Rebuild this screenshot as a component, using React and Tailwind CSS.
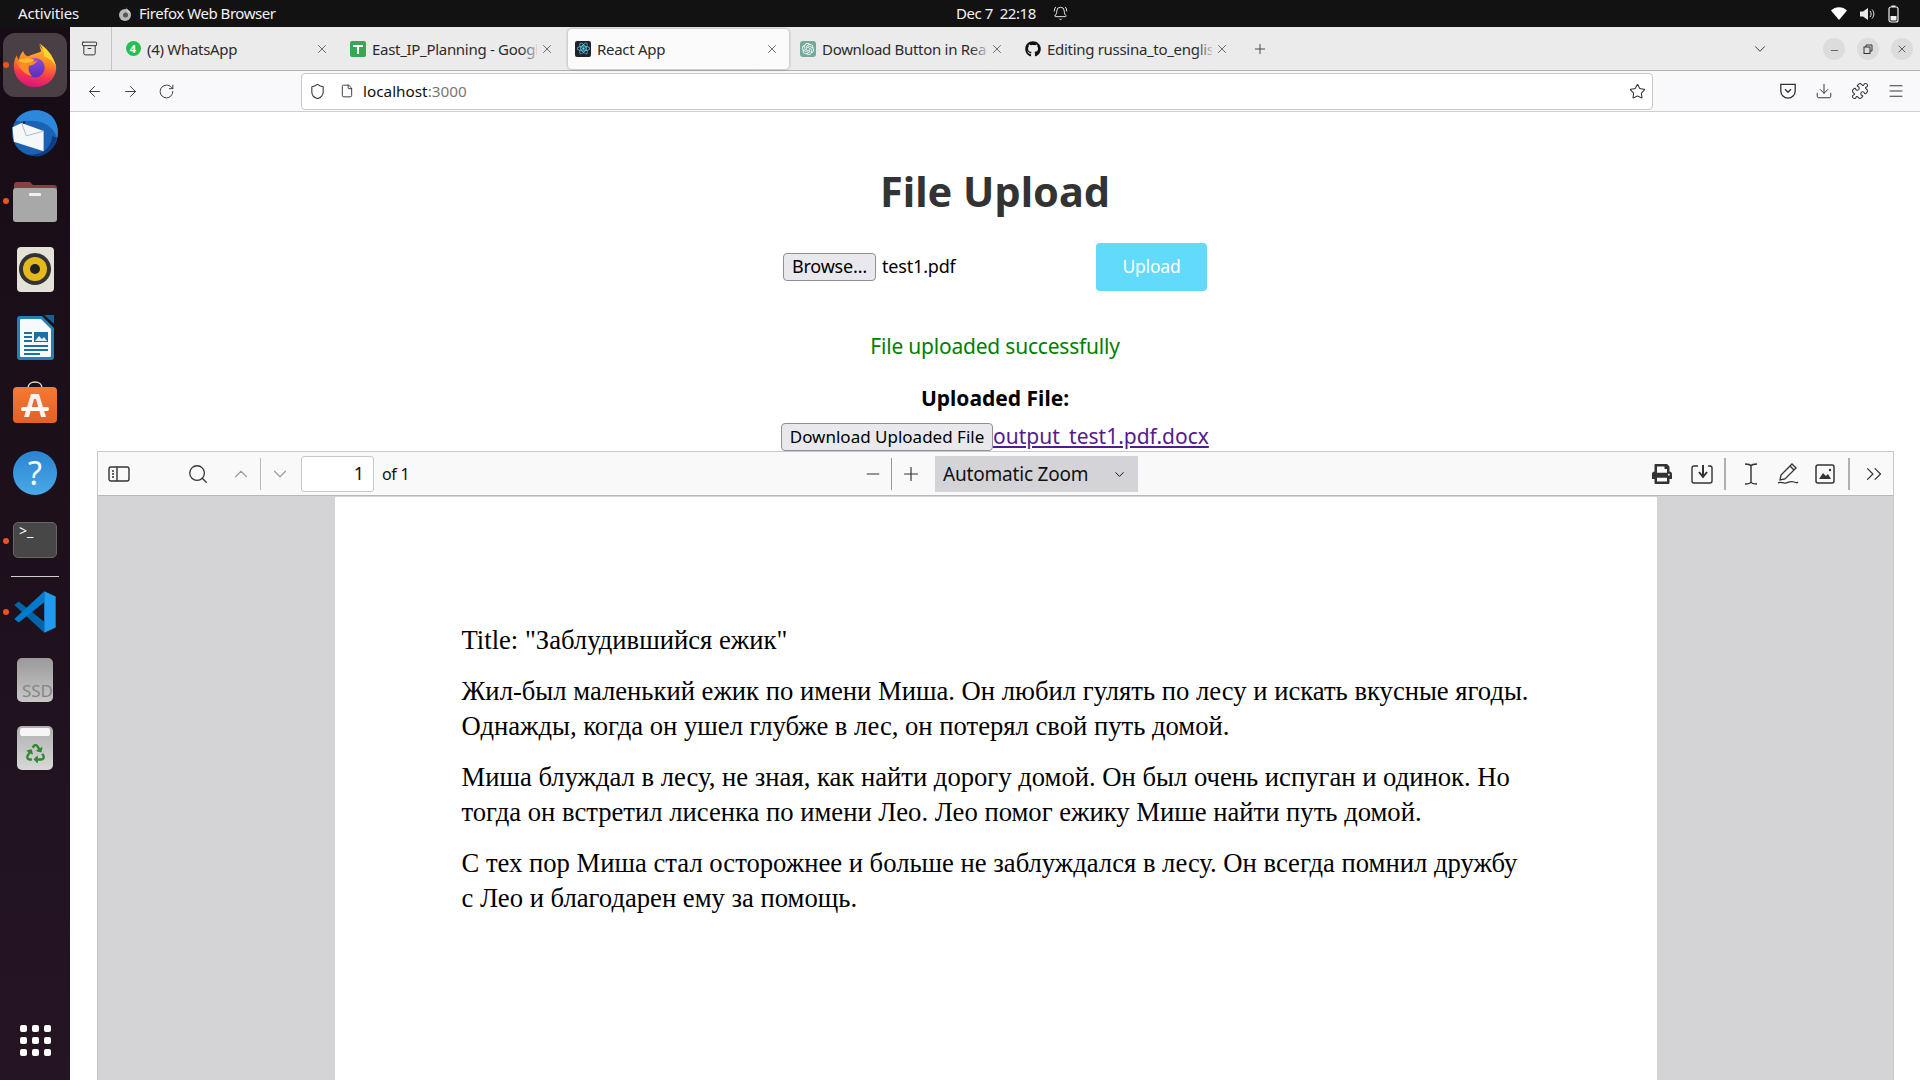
import React from 'react';
import {
  ArrowLeft, ArrowRight, RotateCw, Shield, File, Star, Download, Puzzle, Menu, ChevronDown, ChevronUp,
  ChevronsRight, Minus, Plus, X, Search, BellRing, Archive,
} from 'lucide-react';
import { FaGithub, FaPrint, FaRecycle } from 'react-icons/fa';
import { SiReact, SiOpenai } from 'react-icons/si';

const FirefoxIcon = () => (
  <svg width="44" height="44" viewBox="0 0 100 100">
    <defs>
      <linearGradient id="ffBody" x1="0.6" y1="0" x2="0.4" y2="1">
        <stop offset="0" stopColor="#ffc42e" />
        <stop offset="0.4" stopColor="#ff8a22" />
        <stop offset="0.72" stopColor="#f8364f" />
        <stop offset="1" stopColor="#d6157f" />
      </linearGradient>
      <linearGradient id="ffCore" x1="0.5" y1="0" x2="0.5" y2="1">
        <stop offset="0" stopColor="#8a4be0" />
        <stop offset="1" stopColor="#5b2fb4" />
      </linearGradient>
    </defs>
    <path
      d="M60 1C60 12 75 18 84 28C95 40 99 52 98 60C95 84 74 100 50 100C23 100 2 79 2 52C2 42 5 33 9 28C9 33 11 36 13 38C15 30 18 24 23 18C25 26 30 30 36 30C46 24 62 22 64 18C62 12 60 6 60 1Z"
      fill="url(#ffBody)"
    />
    <circle cx="50" cy="56" r="22" fill="url(#ffCore)" />
    <path d="M8 44C16 36 30 34 40 40C48 44 50 42 56 38C52 48 44 50 36 52C34 60 36 68 44 76C28 72 16 60 8 44Z" fill="#ff8a26" />
    <path d="M12 40C22 32 38 34 50 38C44 44 34 44 26 46Z" fill="#ffb830" />
    <path d="M60 1C72 8 92 26 98 54C92 42 82 34 70 30C72 20 66 10 60 1Z" fill="#ffd42e" />
  </svg>
);

const ThunderbirdIcon = () => (
  <svg width="48" height="48" viewBox="0 0 100 100">
    <circle cx="50" cy="50" r="48" fill="#1c62b4" />
    <path d="M10 24C26 0 62-4 84 14C96 26 100 44 96 60C90 42 76 30 58 26C42 22 24 28 10 24Z" fill="#2b88dc" />
    <path d="M64 90C76 84 84 72 86 56L96 60C92 78 80 92 62 98C54 100 44 99 36 95C46 96 56 94 64 90Z" fill="#0e3f86" />
    <path d="M3 38L22 29L68 46L68 88L6 68Z" fill="#f6f7f9" />
    <path d="M22 29L32 56L68 46" fill="none" stroke="#aeb8c2" strokeWidth="2" />
    <circle cx="27" cy="28" r="2.500" fill="#222222" />
  </svg>
);

const FilesIcon = () => (
  <svg width="44" height="42" viewBox="0 0 44 42">
    <path d="M1 5a3 3 0 0 1 3-3h13l3 3h21a3 3 0 0 1 3 3v12H1z" fill="#8c3f42" />
    <rect x="0" y="8" width="44" height="34" rx="3" fill="#a8a8a8" />
    <rect x="16" y="13" width="12" height="3" rx="1" fill="#f0f0f0" />
  </svg>
);

const RhythmboxIcon = () => (
  <div className="flex h-[45px] w-[37px] items-center justify-center rounded-[4px] bg-[#e4e1d6]">
    <div className="flex h-[32px] w-[32px] items-center justify-center rounded-full bg-[#333333]">
      <div className="flex h-[24px] w-[24px] items-center justify-center rounded-full bg-[#e5b81d]">
        <div className="h-[10px] w-[10px] rounded-full bg-[#222222]" />
      </div>
    </div>
  </div>
);

const WriterIcon = () => (
  <svg width="37" height="45" viewBox="0 0 37 45">
    <path d="M0 4a3 3 0 0 1 3-3h22l12 12v29a3 3 0 0 1-3 3H3a3 3 0 0 1-3-3z" fill="#2380b8" />
    <path d="M3 5a1 1 0 0 1 1-1h20l10 10v27a1 1 0 0 1-1 1H4a1 1 0 0 1-1-1z" fill="#f6fafd" />
    <path d="M27 0l10 9V0z" fill="#14608e" />
    <rect x="17" y="17" width="14" height="10" fill="#1c6fa3" />
    <path d="M18 26l4-5 3 3 2-2 3 4z" fill="#dff0fa" />
    <path d="M7 18h8M7 22h8M7 26h8M7 31h24M7 35h24M7 39h16" stroke="#1c6fa3" strokeWidth="1.800" />
  </svg>
);

const SoftwareIcon = () => (
  <svg width="44" height="42" viewBox="0 0 44 42" className="mt-[-6px]">
    <defs>
      <linearGradient id="swBag" x1="0" y1="0" x2="0" y2="1">
        <stop offset="0" stopColor="#f47a34" />
        <stop offset="1" stopColor="#e46024" />
      </linearGradient>
    </defs>
    <path d="M15 7c0-8 14-8 14 0" fill="none" stroke="#f3d9b8" strokeWidth="1.500" />
    <rect x="0" y="6" width="44" height="36" rx="4" fill="url(#swBag)" />
    <path d="M18 13h8l7 23h-5l-5-18h-2l-5 18h-5z" fill="#fbf0ea" />
    <rect x="8" y="26" width="28" height="4" rx="2" fill="#ffffff" />
  </svg>
);

const VsCodeIcon = () => (
  <svg width="44" height="44" viewBox="0 0 100 100">
    <polygon points="13,26 3,34 71,97 71,72" fill="#0065a9" />
    <polygon points="71,3 3,66 13,74 71,28" fill="#007acc" />
    <polygon points="71,3 97,15 97,85 71,97" fill="#1f9cf0" />
  </svg>
);

const dockItems = [
  { key: 'firefox', node: <FirefoxIcon />, dot: true, active: true },
  { key: 'thunderbird', node: <ThunderbirdIcon /> },
  { key: 'files', node: <FilesIcon />, dot: true },
  { key: 'rhythmbox', node: <RhythmboxIcon /> },
  { key: 'writer', node: <WriterIcon /> },
  { key: 'software', node: <SoftwareIcon /> },
  {
    key: 'help',
    node: (
      <div className="flex h-[44px] w-[44px] items-center justify-center rounded-full bg-gradient-to-b from-[#2a84d2] to-[#4aa9e8] text-[32px] leading-none text-white">
        ?
      </div>
    ),
  },
  {
    key: 'terminal',
    node: (
      <div className="mt-[-3px] h-[36px] w-[44px] rounded-[5px] border border-[#666666] bg-[#474747] pl-[5px] text-[14px] leading-[15px] text-white">
        &gt;_
      </div>
    ),
    dot: true,
  },
];

const dockBottom = [
  { key: 'vscode', node: <VsCodeIcon />, dot: true },
  {
    key: 'ssd',
    node: (
      <div className="flex h-[44px] w-[36px] items-end justify-end overflow-hidden rounded-[5px] bg-gradient-to-b from-[#9a9a9a] to-[#c8c8c8] pb-[3px] text-[17px] leading-[17px] text-[#858585]">
        SSD
      </div>
    ),
  },
  {
    key: 'trash',
    node: (
      <div className="relative flex h-[44px] w-[36px] items-end justify-center rounded-[5px] bg-gradient-to-b from-[#b0b0b0] to-[#d8d8d8] pb-[7px]">
        <div className="absolute top-[2px] left-[3px] h-[8px] w-[30px] rounded-[2px] bg-[#f6f6f6]" />
        <FaRecycle className="text-[#2d8a2d]" size={19} />
      </div>
    ),
  },
];

const DockItem = ({ item }) => (
  <div className="relative flex h-[68px] w-full shrink-0 items-center justify-center">
    {item.active && <div className="absolute top-[2px] left-[3px] h-[64px] w-[64px] rounded-[12px] bg-[#4a3f45]" />}
    {item.dot && <div className="absolute top-[31px] left-[3px] z-10 h-[6px] w-[6px] rounded-full bg-[#e95420]" />}
    <div className="relative flex items-center justify-center">{item.node}</div>
  </div>
);

const Dock = () => (
  <div className="flex w-[70px] shrink-0 flex-col items-center bg-gradient-to-b from-[#160c16] to-[#251522] pt-[4px]">
    {dockItems.map((item) => (
      <DockItem key={item.key} item={item} />
    ))}
    <div className="my-[1px] h-[1px] w-[48px] shrink-0 bg-[#cfcfcf]" />
    {dockBottom.map((item) => (
      <DockItem key={item.key} item={item} />
    ))}
    <div className="mt-auto mb-[24px] grid grid-cols-3 gap-[5px]">
      {[0, 1, 2, 3, 4, 5, 6, 7, 8].map((n) => (
        <div key={n} className="h-[7px] w-[7px] rounded-[2px] bg-white" />
      ))}
    </div>
  </div>
);

const TopBar = () => (
  <div className="relative flex h-[27px] shrink-0 items-center bg-[#121212] text-[15px] tracking-[-0.01em] text-[#f2f2f2]">
    <span className="ml-[18px]">Activities</span>
    <svg className="ml-[39px]" width="14" height="14" viewBox="0 0 14 14">
      <circle cx="7" cy="8" r="6" fill="#b8b8b8" />
      <circle cx="7.5" cy="8" r="2.5" fill="#555555" />
      <path d="M8 0c1 3 4 4 5 7L9 4z" fill="#dddddd" />
    </svg>
    <span className="ml-[7px] tracking-[-0.03em]">Firefox Web Browser</span>
    <div className="absolute top-0 left-[956px] flex h-full items-center gap-[17px]">
      <span className="tracking-[-0.03em] whitespace-pre">Dec 7  22:18</span>
      <BellRing size={15} strokeWidth={1.5} />
    </div>
    <div className="ml-auto mr-[21px] flex items-center gap-[13px]">
      <svg width="16" height="13" viewBox="0 0 16 13">
        <path d="M0 3.5C4-1 12-1 16 3.5L8 13z" fill="#ffffff" />
      </svg>
      <svg width="15" height="14" viewBox="0 0 15 14">
        <path d="M0 4.5h3L8 1v12L3 9.500H0z" fill="#e8e8e8" />
        <path d="M10 4c1.500 2 1.500 4 0 6M12 2.500c2.500 3 2.500 6 0 9" fill="none" stroke="#e8e8e8" strokeWidth="1" />
      </svg>
      <svg width="11" height="18" viewBox="0 0 11 18">
        <rect x="1" y="2" width="9" height="15" rx="2" fill="none" stroke="#eeeeee" strokeWidth="1.200" />
        <rect x="3.500" y="0.500" width="4" height="1.500" fill="#eeeeee" />
        <rect x="2.500" y="11" width="6" height="4.500" fill="#eeeeee" />
      </svg>
    </div>
  </div>
);

const tabs = [
  {
    title: '(4) WhatsApp',
    icon: (
      <div className="flex h-[15px] w-[15px] items-center justify-center rounded-full bg-[#25c04f] text-[11px] leading-none font-bold text-white">
        4
      </div>
    ),
  },
  {
    title: 'East_IP_Planning - Google',
    icon: (
      <div className="relative h-[16px] w-[16px] rounded-[2px] bg-[#34a853]">
        <div className="absolute top-[4px] left-[3px] h-[2px] w-[10px] bg-white" />
        <div className="absolute top-[4px] left-[7px] h-[9px] w-[2px] bg-white" />
      </div>
    ),
  },
  {
    title: 'React App',
    active: true,
    icon: (
      <div className="flex h-[16px] w-[16px] items-center justify-center rounded-[2px] bg-[#20232a]">
        <SiReact size={13} className="text-[#61dafb]" />
      </div>
    ),
  },
  {
    title: 'Download Button in React',
    icon: (
      <div className="flex h-[16px] w-[16px] items-center justify-center rounded-[3px] bg-[#74aa9c]">
        <SiOpenai size={12} className="text-white" />
      </div>
    ),
  },
  { title: 'Editing russina_to_english', icon: <FaGithub size={16} className="text-[#111111]" /> },
];

const Tab = ({ tab }) => (
  <div
    className={`relative flex h-[40px] w-[221px] shrink-0 items-center pl-[7px] ${
      tab.active ? 'rounded-[4px] bg-[#fbfbfb] shadow-[0_0_3px_rgba(0,0,0,0.35)]' : ''
    }`}
  >
    <div className="flex w-[16px] shrink-0 justify-center">{tab.icon}</div>
    <span className="ml-[6px] w-[165px] overflow-hidden pt-[1px] text-[15px] tracking-[-0.02em] whitespace-nowrap text-[#2b2b2b]">
      {tab.title}
    </span>
    <div
      className={`absolute top-0 right-[23px] h-full w-[20px] bg-gradient-to-r from-transparent ${
        tab.active ? 'to-[#fbfbfb]' : 'to-[#ebebeb]'
      }`}
    />
    <X size={14} strokeWidth={1.2} className="absolute right-[10px] text-[#333333]" />
  </div>
);

const TabBar = () => (
  <div className="flex h-[44px] shrink-0 items-center border-b border-[#b0b0b0] bg-[#ebebeb]">
    <div className="flex h-full w-[42px] shrink-0 items-center justify-center border-r border-[#c4c4c4] pr-[2px]">
      <Archive size={17} strokeWidth={1.4} className="text-[#333333]" />
    </div>
    <div className="ml-[6px] flex items-center gap-[4px]">
      {tabs.map((tab) => (
        <Tab key={tab.title} tab={tab} />
      ))}
    </div>
    <Plus size={16} strokeWidth={1.3} className="ml-[13px] text-[#333333]" />
    <ChevronDown size={18} strokeWidth={1.3} className="ml-[483px] text-[#333333]" />
    <div className="ml-auto mr-[7px] flex items-center gap-[12px]">
      <div className="flex h-[22px] w-[22px] items-center justify-center rounded-full bg-[#dcdcdc]">
        <Minus size={11} strokeWidth={1.5} className="mt-[3px] text-[#333333]" />
      </div>
      <div className="flex h-[22px] w-[22px] items-center justify-center rounded-full bg-[#dcdcdc]">
        <svg width="10" height="10" viewBox="0 0 10 10" fill="none" stroke="#333333" strokeWidth="1">
          <rect x="1" y="3" width="6" height="6.500" />
          <path d="M3 3V1h6v6H7" />
        </svg>
      </div>
      <div className="flex h-[22px] w-[22px] items-center justify-center rounded-full bg-[#dcdcdc]">
        <X size={12} strokeWidth={1.5} className="text-[#333333]" />
      </div>
    </div>
  </div>
);

const NavBar = () => (
  <div className="flex h-[41px] shrink-0 items-center border-b border-[#cfcfcf] bg-[#f9f9fb] text-[#333333]">
    <ArrowLeft size={17} strokeWidth={1.3} className="ml-[16px]" />
    <ArrowRight size={17} strokeWidth={1.3} className="ml-[19px]" />
    <RotateCw size={17} strokeWidth={1.3} className="ml-[19px]" />
    <div className="ml-[126px] flex h-[37px] w-[1352px] items-center rounded-[4px] border border-[#c8c8c8] bg-white">
      <Shield size={17} strokeWidth={1.5} className="ml-[7px]" />
      <File size={14} strokeWidth={1.6} className="ml-[14px]" />
      <span className="ml-[9px] pt-[1px] text-[15.300px] text-[#111111]">
        localhost<span className="text-[#777777]">:3000</span>
      </span>
      <Star size={17} strokeWidth={1.5} className="ml-auto mr-[6px]" />
    </div>
    <div className="ml-auto mr-[15px] flex items-center gap-[18px]">
      <svg width="18" height="18" viewBox="0 0 15 15" fill="none" stroke="#333333" strokeWidth="1.100">
        <path d="M1.500 2h12v5.500a6 6 0 0 1-12 0z" />
        <path d="M5 6l2.500 2.500L10 6" />
      </svg>
      <Download size={18} strokeWidth={1.3} />
      <Puzzle size={18} strokeWidth={1.4} />
      <Menu size={18} strokeWidth={1.3} />
    </div>
  </div>
);

const PdfToolbar = () => (
  <div className="flex h-[44px] shrink-0 items-center border-b border-[#b8b8b8] bg-[#f9f9fa] text-[#333333]">
    <div className="flex w-[765px] shrink-0 items-center">
      <svg className="ml-[10px]" width="22" height="18" viewBox="0 0 22 18" fill="none" stroke="#333333" strokeWidth="1.400">
        <rect x="1" y="2" width="20" height="14" rx="2" />
        <path d="M9 2v14M4 6h2M4 9h2M4 12h2" />
      </svg>
      <Search size={22} strokeWidth={1.4} className="ml-[57px]" />
      <ChevronUp size={22} strokeWidth={1.2} className="ml-[21px] text-[#9a9a9a]" />
      <div className="mx-[8px] h-[32px] w-[1px] bg-[#b8b8b8]" />
      <ChevronDown size={22} strokeWidth={1.2} className="text-[#9a9a9a]" />
      <div className="ml-[10px] flex h-[36px] w-[73px] items-center justify-end rounded-[3px] border border-[#c8c8c8] bg-white pr-[9px] text-[18px] text-[#111111]">
        1
      </div>
      <span className="ml-[8px] text-[16px] tracking-[-0.02em] text-[#111111]">of 1</span>
    </div>
    <Minus size={20} strokeWidth={1.3} />
    <div className="mx-[8px] h-[32px] w-[1px] bg-[#9a9a9a]" />
    <Plus size={22} strokeWidth={1.3} />
    <div className="mt-[1px] ml-[13px] flex h-[36px] w-[203px] items-center justify-between bg-[#d4d4d8] pr-[11px] pl-[8px] text-[19px] tracking-[-0.01em] whitespace-nowrap text-[#111111]">
      Automatic Zoom
      <ChevronDown size={15} strokeWidth={1.6} />
    </div>
    <div className="ml-auto mr-[6px] flex items-center">
      <FaPrint size={20} />
      <svg className="ml-[19px]" width="22" height="20" viewBox="0 0 22 20" fill="none" stroke="#333333" strokeWidth="1.400">
        <path d="M7 2H3a2 2 0 0 0-2 2v13a2 2 0 0 0 2 2h16a2 2 0 0 0 2-2V4a2 2 0 0 0-2-2h-2" />
        <path d="M12 1v11M8 8l4 5 4-5" strokeWidth="2" />
      </svg>
      <div className="mr-[18px] ml-[11px] h-[32px] w-[2px] bg-[#b0b0b0]" />
      <svg width="14" height="24" viewBox="0 0 14 24" fill="none" stroke="#333333" strokeWidth="1.400">
        <path d="M1 2c3 0 5 0 6 2 1-2 3-2 6-2M7 4v16M1 22c3 0 5 0 6-2 1 2 3 2 6 2" />
      </svg>
      <svg className="ml-[19px]" width="22" height="24" viewBox="0 0 22 24" fill="none" stroke="#333333" strokeWidth="1.300">
        <path d="M15 2l4 4L8 17l-5 1 1-5zM13 4l4 4" />
        <path d="M1 21c3-2 5 1 8 0s5-2 8-1 3 1 4 0" />
      </svg>
      <svg className="ml-[16px]" width="20" height="20" viewBox="0 0 20 20" fill="none" stroke="#333333" strokeWidth="1.500">
        <rect x="1" y="1" width="18" height="18" rx="2" />
        <path d="M4 15l4-6 3 3 2-2 3 5z" fill="#333333" stroke="none" />
        <circle cx="15" cy="6" r="1.200" fill="#333333" stroke="none" />
      </svg>
      <div className="mr-[11px] ml-[13px] h-[32px] w-[2px] bg-[#b0b0b0]" />
      <ChevronsRight size={26} strokeWidth={1.1} />
    </div>
  </div>
);

const PdfPage = () => (
  <div className="mx-auto mt-[1px] h-full w-[1322px] shrink-0 bg-white pt-[126px] pl-[127px] font-['Liberation_Serif',serif] text-[26.650px] leading-[35.500px] whitespace-nowrap text-black">
    <p className="mb-[15px]">Title: "Заблудившийся ежик"</p>
    <p className="mb-[15px]">
      Жил-был маленький ежик по имени Миша. Он любил гулять по лесу и искать вкусные ягоды.
      <br />
      Однажды, когда он ушел глубже в лес, он потерял свой путь домой.
    </p>
    <p className="mb-[15px]">
      Миша блуждал в лесу, не зная, как найти дорогу домой. Он был очень испуган и одинок. Но
      <br />
      тогда он встретил лисенка по имени Лео. Лео помог ежику Мише найти путь домой.
    </p>
    <p>
      С тех пор Миша стал осторожнее и больше не заблуждался в лесу. Он всегда помнил дружбу
      <br />с Лео и благодарен ему за помощь.
    </p>
  </div>
);

const UploadPage = () => (
  <div className="flex min-h-0 flex-1 flex-col items-center bg-white">
    <h1 className="mt-[55px] text-[41.500px] leading-[48px] font-bold text-[#333333]">File Upload</h1>
    <div className="mt-[28px] flex h-[48px] w-[424px] items-center">
      <button className="h-[28px] w-[93px] rounded-[4px] border border-[#8f8f9d] bg-[#e9e9ed] pb-[2px] text-[18px] leading-[24px] tracking-[-0.01em] whitespace-nowrap text-black">
        Browse…
      </button>
      <span className="mb-[2px] ml-[6px] text-[18px] tracking-[-0.01em] text-black">test1.pdf</span>
      <button className="ml-auto h-[48px] w-[111px] rounded-[4px] bg-[#61dafb] pb-[2px] text-[17.500px] tracking-[-0.01em] text-white">
        Upload
      </button>
    </div>
    <p className="mt-[42px] text-[21px] leading-[26px] tracking-[-0.01em] text-[#008000]">File uploaded successfully</p>
    <p className="mt-[27px] text-[21px] leading-[24px] font-bold text-black">Uploaded File:</p>
    <div className="mt-[13px] flex h-[28px] w-[428px] items-center">
      <button className="h-[28px] w-[212px] shrink-0 rounded-[4px] border border-[#8f8f9d] bg-[#e9e9ed] text-[17px] leading-[24px] whitespace-nowrap text-black">
        Download Uploaded File
      </button>
      <a href="#" className="text-[21px] whitespace-nowrap text-[#551a8b] underline">
        output_test1.pdf.docx
      </a>
    </div>
    <div className="mr-[26px] ml-[27px] flex min-h-0 w-[1797px] flex-1 flex-col overflow-hidden border border-b-0 border-[#c8c8c8] bg-[#d4d4d7]">
      <PdfToolbar />
      <PdfPage />
    </div>
  </div>
);

export default function App() {
  return (
    <div className="flex h-screen flex-col overflow-hidden bg-white font-['Noto_Sans',sans-serif]">
      <TopBar />
      <div className="flex min-h-0 flex-1">
        <Dock />
        <div className="flex min-w-0 flex-1 flex-col">
          <TabBar />
          <NavBar />
          <UploadPage />
        </div>
      </div>
    </div>
  );
}
